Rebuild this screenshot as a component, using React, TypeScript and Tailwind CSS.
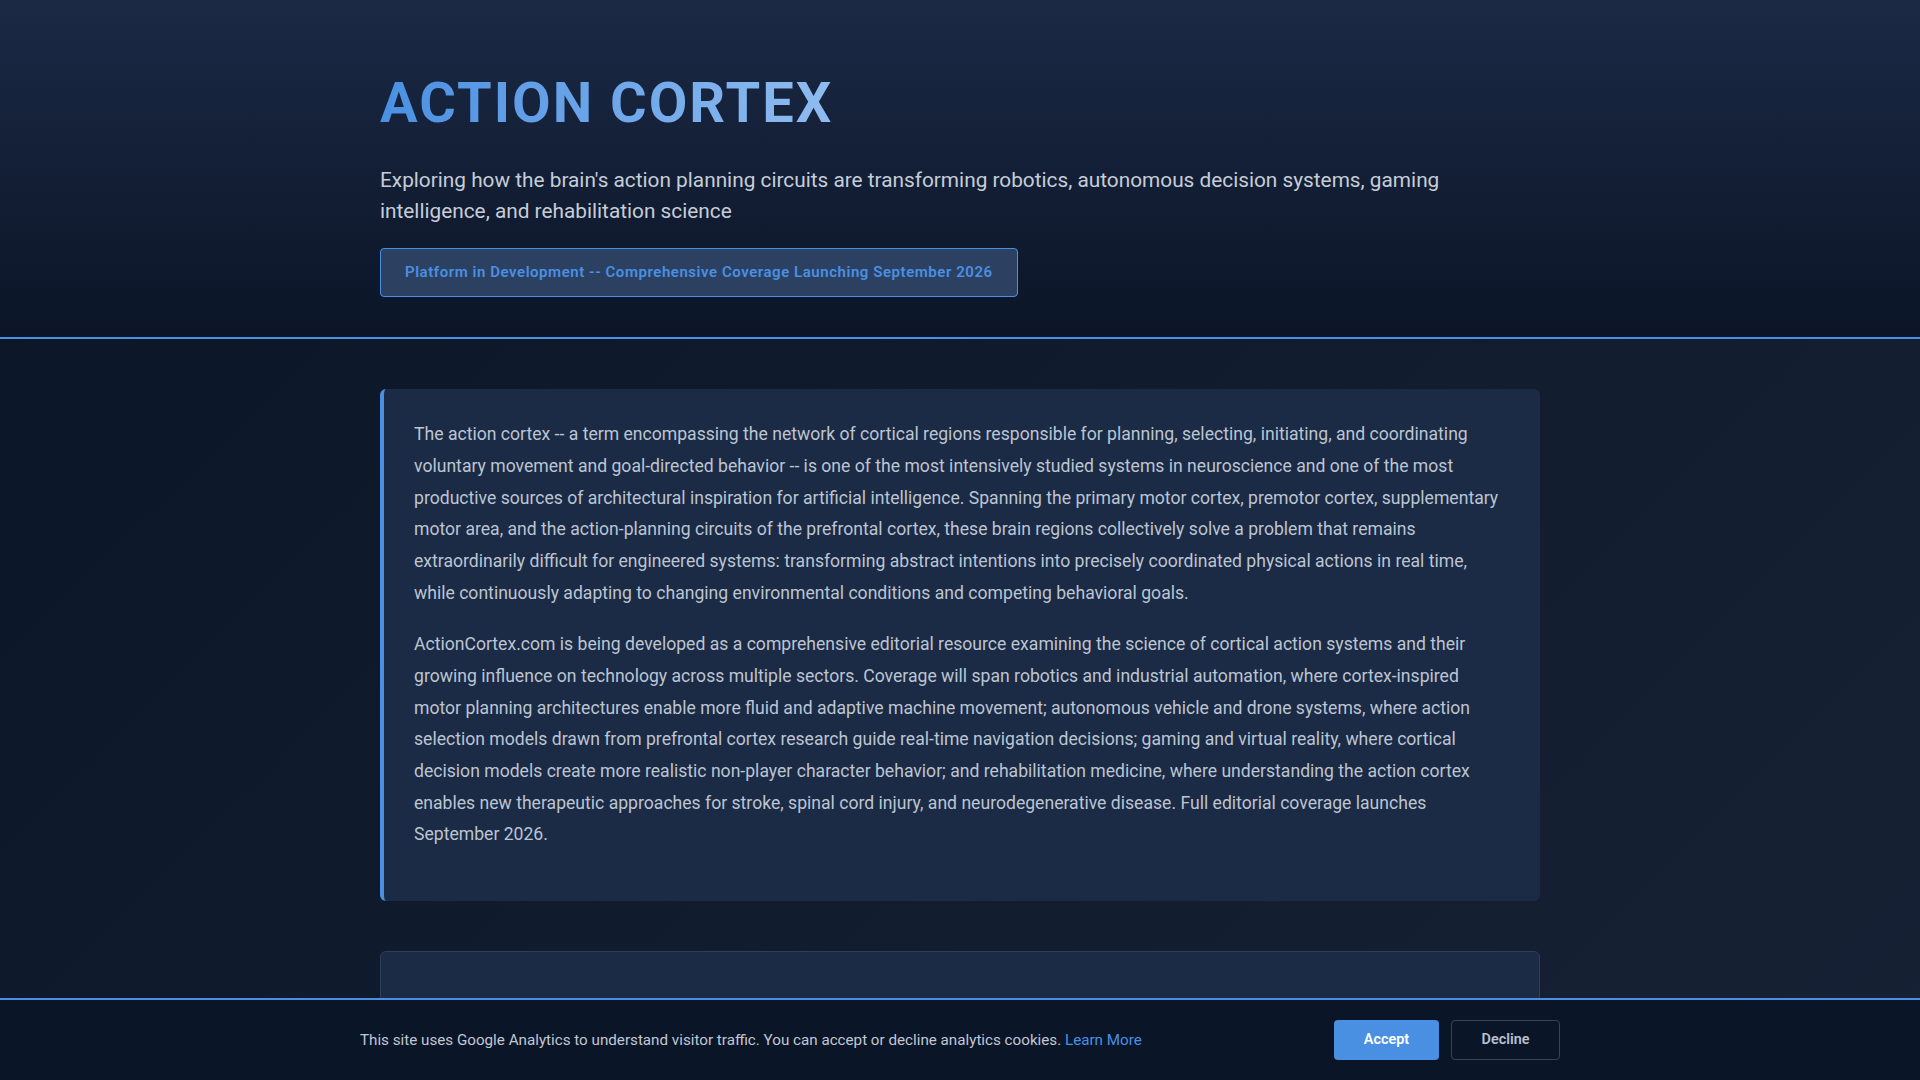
const paragraphs = [
  'The action cortex -- a term encompassing the network of cortical regions responsible for planning, selecting, initiating, and coordinating voluntary movement and goal-directed behavior -- is one of the most intensively studied systems in neuroscience and one of the most productive sources of architectural inspiration for artificial intelligence. Spanning the primary motor cortex, premotor cortex, supplementary motor area, and the action-planning circuits of the prefrontal cortex, these brain regions collectively solve a problem that remains extraordinarily difficult for engineered systems: transforming abstract intentions into precisely coordinated physical actions in real time, while continuously adapting to changing environmental conditions and competing behavioral goals.',
  'ActionCortex.com is being developed as a comprehensive editorial resource examining the science of cortical action systems and their growing influence on technology across multiple sectors. Coverage will span robotics and industrial automation, where cortex-inspired motor planning architectures enable more fluid and adaptive machine movement; autonomous vehicle and drone systems, where action selection models drawn from prefrontal cortex research guide real-time navigation decisions; gaming and virtual reality, where cortical decision models create more realistic non-player character behavior; and rehabilitation medicine, where understanding the action cortex enables new therapeutic approaches for stroke, spinal cord injury, and neurodegenerative disease. Full editorial coverage launches September 2026.',
];

export default function App() {
  return (
    <div className="min-h-screen bg-[linear-gradient(135deg,#0a1526_0%,#172236_100%)] font-['Roboto','Liberation_Sans',sans-serif]">
      {/* Header */}
      <header className="bg-[linear-gradient(180deg,#1b2945_0%,#0b1527_100%)] border-b-2 border-[#4a90e2]">
        <div className="max-w-[1200px] mx-auto px-5 pt-[70px] pb-[40px]">
          <h1 className="inline-block text-[56px] leading-[1.2] font-bold tracking-[2px] bg-gradient-to-r from-[#4a90e2] to-[#8fbcf0] bg-clip-text text-transparent">
            ACTION CORTEX
          </h1>
          <p className="mt-[28px] text-[20.8px] leading-[30.6px] text-[#c6cdd8]">
            Exploring how the brain's action planning circuits are transforming robotics, autonomous decision systems, gaming intelligence, and rehabilitation science
          </p>
          <div className="mt-[22px] inline-block rounded border border-[#4a90e2] bg-[#2c4162] px-[24px] py-[14px] text-[15px] leading-[19px] font-semibold tracking-[0.55px] text-[#4a90e2]">
            Platform in Development -- Comprehensive Coverage Launching September 2026
          </div>
        </div>
      </header>

      {/* Main */}
      <main className="max-w-[1200px] mx-auto px-5 pt-[50px] pb-[120px]">
        <section className="rounded-md border-l-4 border-[#4a90e2] bg-[#1b2a45] px-[30px] pt-[30px] pb-[30px]">
          {paragraphs.map((text) => (
            <p key={text.slice(0, 20)} className="mb-5 text-[17.6px] leading-[1.8] text-[#bcc5d2]">
              {text}
            </p>
          ))}
        </section>

        {/* next section, mostly hidden behind the cookie bar */}
        <section className="mt-[50px] h-[240px] rounded-md border border-[#2d3e5a] bg-[#1b2a45]" />
      </main>

      {/* Cookie banner */}
      <div className="fixed bottom-0 left-0 right-0 border-t-2 border-[#4a90e2] bg-[#0b1528]">
        <div className="max-w-[1200px] mx-auto flex items-center justify-between py-5">
          <p className="text-[15.2px] text-[#c0c8d4]">
            This site uses Google Analytics to understand visitor traffic. You can accept or decline analytics cookies.{' '}
            <a href="#" className="text-[#4a90e2]">Learn More</a>
          </p>
          <div className="flex gap-3">
            <button className="h-10 w-[105px] rounded bg-[#4a90e2] text-[14.4px] font-semibold text-white">
              Accept
            </button>
            <button className="h-10 w-[109px] rounded border border-[#33445f] text-[14.4px] font-semibold text-[#b8c2d0]">
              Decline
            </button>
          </div>
        </div>
      </div>
    </div>
  );
}
